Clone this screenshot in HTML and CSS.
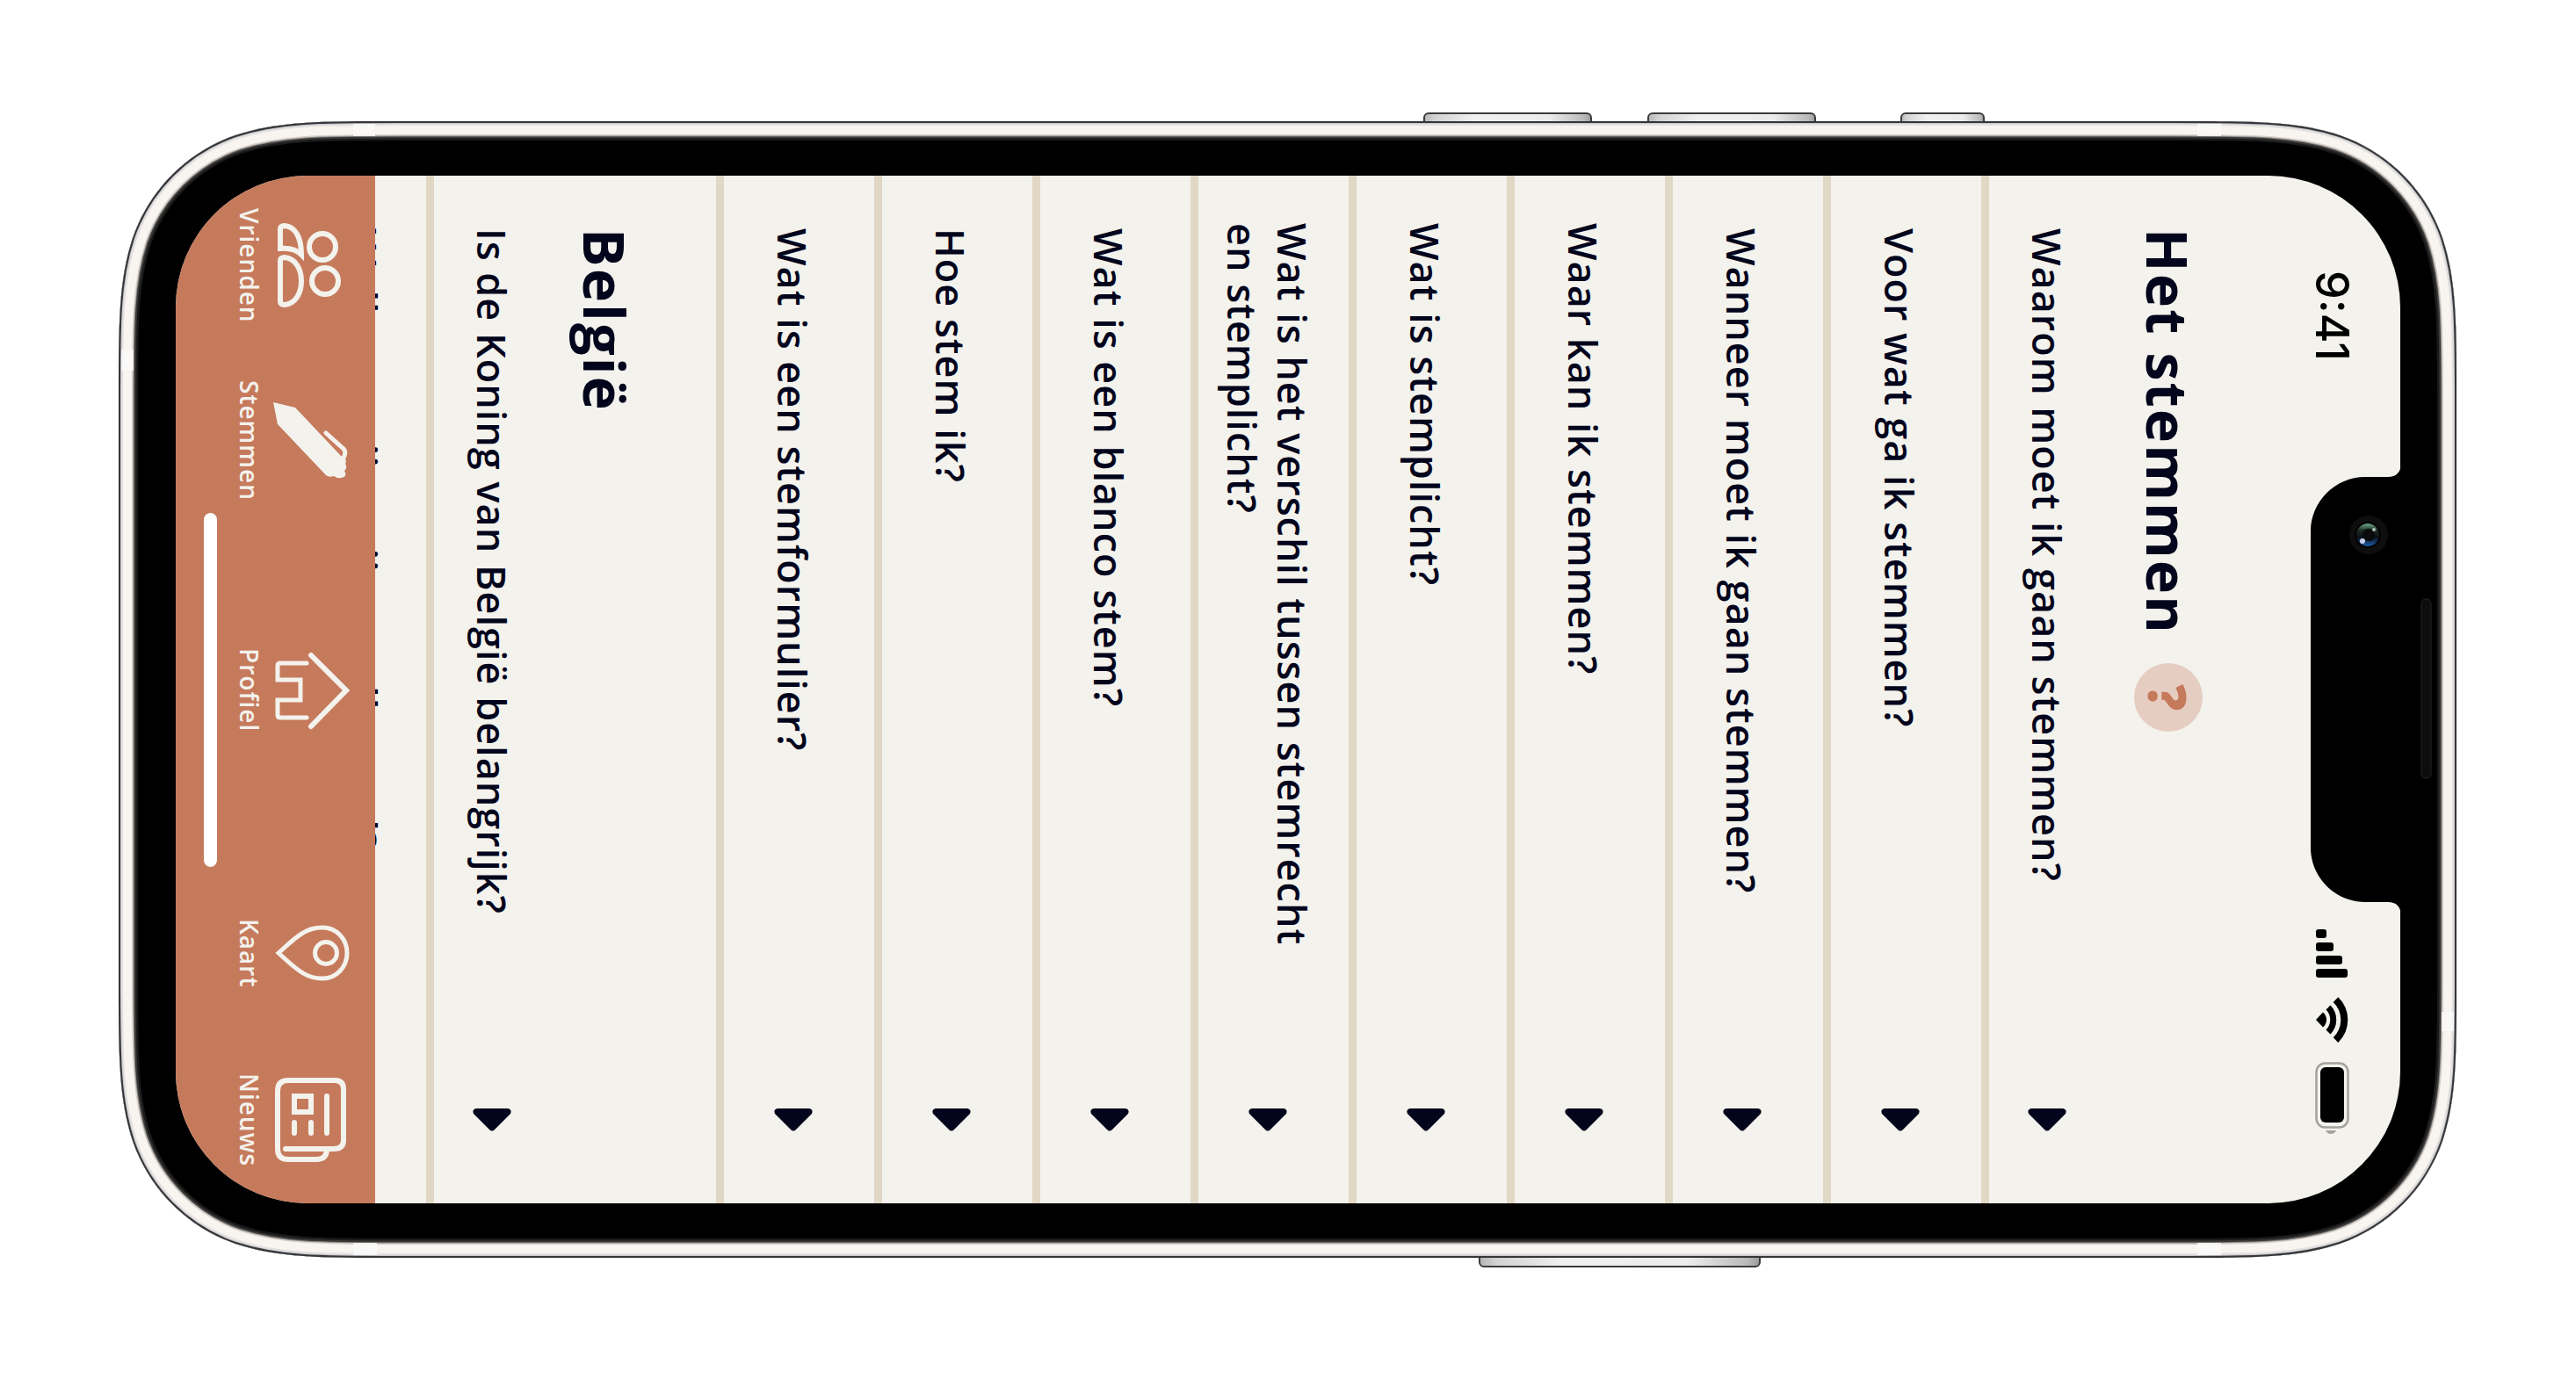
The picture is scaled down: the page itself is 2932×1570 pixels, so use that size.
FILE: index.html
```html
<!DOCTYPE html>
<html lang="nl">
<head>
<meta charset="utf-8">
<meta name="viewport" content="width=device-width, initial-scale=1">
<title>Het stemmen</title>
<link rel="stylesheet" href="styles.css">
</head>
<body>
<div class="stage">
  <div class="phone">
    <svg class="phone-frame" viewBox="0 0 2661 1294" preserveAspectRatio="none" aria-hidden="true">
      <defs>
        <linearGradient id="key" x1="0" x2="1" y1="0" y2="0">
          <stop offset="0" stop-color="#b5b5b5"/>
          <stop offset="0.06" stop-color="#d2d2d2"/>
          <stop offset="0.3" stop-color="#f0f0f0"/>
          <stop offset="0.75" stop-color="#ececec"/>
          <stop offset="0.96" stop-color="#b8b8b8"/>
          <stop offset="1" stop-color="#9a9a9a"/>
        </linearGradient>
        <path id="body" d="M321 0H2340C2432 0 2479 0 2528 16C2583 35 2626 78 2645 133C2661 182 2661 229 2661 321V973C2661 1065 2661 1112 2645 1161C2626 1216 2583 1259 2528 1278C2479 1294 2432 1294 2340 1294H321C229 1294 182 1294 133 1278C78 1259 35 1216 16 1161C0 1112 0 1065 0 973V321C0 229 0 182 16 133C35 78 78 35 133 16C182 0 229 0 321 0Z"/>
        <clipPath id="body-clip"><use href="#body"/></clipPath>
      </defs>
      <g fill="url(#key)" stroke="#3a3c3a" stroke-width="2">
        <rect x="1486" y="-9" width="190" height="20" rx="5"/>
        <rect x="1741" y="-9" width="190" height="20" rx="5"/>
        <rect x="2029" y="-9" width="94" height="20" rx="5"/>
        <rect x="1549" y="1284" width="319" height="20" rx="5"/>
      </g>
      <g clip-path="url(#body-clip)" fill="none">
        <use href="#body" fill="#000"/>
        <use href="#body" stroke="#1a1a1a" stroke-width="44"/>
        <use href="#body" stroke="#3a3a39" stroke-width="39"/>
        <use href="#body" stroke="#8f8b87" stroke-width="35"/>
        <use href="#body" stroke="#d3ceca" stroke-width="33"/>
        <use href="#body" stroke="#f8f4ef" stroke-width="30"/>
        <use href="#body" stroke="#e3e0df" stroke-width="10"/>
        <use href="#body" stroke="#c6c6cb" stroke-width="6"/>
        <use href="#body" stroke="#34363a" stroke-width="4"/>
      </g>
      <g fill="#fafafa" opacity="0.8">
        <rect x="267" y="3" width="25" height="14"/>
        <rect x="267" y="1277" width="27" height="14"/>
        <rect x="2366" y="3" width="27" height="14"/>
        <rect x="2366" y="1277" width="27" height="14"/>
        <rect x="3" y="260" width="14" height="24"/>
        <rect x="2644" y="1014" width="14" height="22"/>
      </g>
    </svg>

    <div class="screen">
      <header class="status">
        <time class="clock">9:41</time>
        <div class="status-icons">
          <svg width="37" height="55" viewBox="0 0 37 55" role="img" aria-label="Signaal">
            <rect width="12" height="10" rx="3"/><rect y="15" width="20" height="10" rx="3"/><rect y="30" width="30" height="10" rx="3"/><rect y="45" width="36" height="10" rx="3"/>
          </svg>
          <svg width="37" height="52" viewBox="0 0 37 52" role="img" aria-label="Wifi">
            <path d="M0 26L8 17.500Q12 21 12 26T8 34.500Z"/>
            <path d="M14 12A20 20 0 0 1 14 40" fill="none" stroke="#000" stroke-width="7"/>
            <path d="M22.500 3A32 32 0 0 1 22.500 49" fill="none" stroke="#000" stroke-width="8"/>
          </svg>
          <svg width="39" height="83" viewBox="0 0 39 83" role="img" aria-label="Batterij">
            <rect x="1.500" y="1.500" width="36" height="73" rx="10" fill="none" stroke="#a3a29d" stroke-width="2.500"/>
            <rect x="6" y="6" width="27" height="63" rx="6"/>
            <path d="M12 78H24Q22 82 18 82T12 78Z" fill="#a3a29d"/>
          </svg>
        </div>
      </header>

      <main class="content">
        <section class="topic">
          <div class="topic-head">
            <h1 class="topic-title">Het stemmen</h1>
            <button class="help" type="button" aria-label="Uitleg">?</button>
          </div>
          <button class="question question--lead" type="button"><span>Waarom moet ik gaan stemmen?</span><svg class="arrow" viewBox="0 0 44 26"><path d="M4 0H40Q45 1 43 6L25 24Q22 27 19 24L1 6Q-1 1 4 0Z"/></svg></button>
          <button class="question" type="button"><span>Voor wat ga ik stemmen?</span><svg class="arrow" viewBox="0 0 44 26"><path d="M4 0H40Q45 1 43 6L25 24Q22 27 19 24L1 6Q-1 1 4 0Z"/></svg></button>
          <button class="question" type="button"><span>Wanneer moet ik gaan stemmen?</span><svg class="arrow" viewBox="0 0 44 26"><path d="M4 0H40Q45 1 43 6L25 24Q22 27 19 24L1 6Q-1 1 4 0Z"/></svg></button>
          <button class="question question--outdent" type="button"><span>Waar kan ik stemmen?</span><svg class="arrow" viewBox="0 0 44 26"><path d="M4 0H40Q45 1 43 6L25 24Q22 27 19 24L1 6Q-1 1 4 0Z"/></svg></button>
          <button class="question question--outdent" type="button"><span>Wat is stemplicht?</span><svg class="arrow" viewBox="0 0 44 26"><path d="M4 0H40Q45 1 43 6L25 24Q22 27 19 24L1 6Q-1 1 4 0Z"/></svg></button>
          <button class="question question--outdent" type="button"><span>Wat is het verschil tussen stemrecht<br>en stemplicht?</span><svg class="arrow" viewBox="0 0 44 26"><path d="M4 0H40Q45 1 43 6L25 24Q22 27 19 24L1 6Q-1 1 4 0Z"/></svg></button>
          <button class="question" type="button"><span>Wat is een blanco stem?</span><svg class="arrow" viewBox="0 0 44 26"><path d="M4 0H40Q45 1 43 6L25 24Q22 27 19 24L1 6Q-1 1 4 0Z"/></svg></button>
          <button class="question" type="button"><span>Hoe stem ik?</span><svg class="arrow" viewBox="0 0 44 26"><path d="M4 0H40Q45 1 43 6L25 24Q22 27 19 24L1 6Q-1 1 4 0Z"/></svg></button>
          <button class="question" type="button"><span>Wat is een stemformulier?</span><svg class="arrow" viewBox="0 0 44 26"><path d="M4 0H40Q45 1 43 6L25 24Q22 27 19 24L1 6Q-1 1 4 0Z"/></svg></button>
        </section>
        <section class="topic">
          <div class="topic-head topic-head--next">
            <h2 class="topic-title">België</h2>
          </div>
          <button class="question question--lead" type="button"><span>Is de Koning van België belangrijk?</span><svg class="arrow" viewBox="0 0 44 26"><path d="M4 0H40Q45 1 43 6L25 24Q22 27 19 24L1 6Q-1 1 4 0Z"/></svg></button>
          <button class="question question--last" type="button"><span>Welke partijen zijn er allemaal?</span></button>
        </section>
      </main>

      <footer class="dock">
        <nav class="tabs">
          <a class="tab" href="#vrienden">
            <svg class="tab-icon" viewBox="0 0 88 100" stroke-width="6">
              <circle cx="57" cy="29" r="15"/><circle cx="60" cy="68" r="15"/>
              <path d="M9 31V9Q9 5 14 5C26 6 33 18 33 38C27 32 20 30 9 31Z"/>
              <path d="M14 41C26 42 33 54 33 68C33 82 26 94 14 95Q9 95 9 91V45Q9 41 14 41Z"/>
            </svg>
            <span>Vrienden</span>
          </a>
          <a class="tab" href="#stemmen">
            <svg class="tab-icon" viewBox="0 0 88 100" stroke-width="5">
              <path class="solid" d="M1 7L26 13L79 69Q86 72 83 77Q86 81 82 85Q86 92 78 93Q74 94 70 91Q65 93 61 90L6 32Z"/>
              <path d="M61 42L81 60Q85 64 80 72"/>
            </svg>
            <span>Stemmen</span>
          </a>
          <a class="tab" href="#profiel">
            <svg class="tab-icon" viewBox="0 0 88 100" stroke-width="6">
              <path d="M44 10L84 50L44 91"/>
              <path d="M39 19H9Q6 19 6 22V38H32V61H6V78Q6 81 9 81H39" stroke-width="5"/>
            </svg>
            <span>Profiel</span>
          </a>
          <a class="tab" href="#kaart">
            <svg class="tab-icon" viewBox="0 0 88 100" stroke-width="5">
              <path d="M7 50C17 41 26 32 35 27C43 22 50 21 57 21C73 21 85 34 85 50C85 66 73 79 57 79C50 79 43 78 35 73C26 68 17 59 7 50Z"/>
              <circle cx="61" cy="50" r="12.500"/>
            </svg>
            <span>Kaart</span>
          </a>
          <a class="tab" href="#nieuws">
            <svg class="tab-icon" viewBox="0 0 88 100" stroke-width="6">
              <path d="M15 83H70Q81 83 81 73V15Q81 5 71 5H18Q6 5 6 17V83Q6 95 18 95H50Q62 95 62 83"/>
              <path d="M25 23H44V41H25ZM62 23V65M25 53V65M44 53V65"/>
            </svg>
            <span>Nieuws</span>
          </a>
        </nav>
        <div class="home-bar"></div>
      </footer>
    </div>

    <svg class="notch" width="140" height="514" viewBox="0 0 140 514" aria-hidden="true">
      <defs>
        <linearGradient id="lens" x1="0" x2="0" y1="0" y2="1">
          <stop offset="0" stop-color="#6fae8c"/><stop offset="0.3" stop-color="#1d2b26"/><stop offset="0.6" stop-color="#0b0f1c"/><stop offset="1" stop-color="#1f5fae"/>
        </linearGradient>
      </defs>
      <path d="M103 0Q102 15 88 15H62C28 15 0 43 0 77V437C0 471 28 499 62 499H88Q102 499 103 514Z"/>
      <circle cx="66" cy="81" r="22" fill="#0e0e0e"/>
      <circle cx="65" cy="81" r="13" fill="url(#lens)"/>
      <circle cx="66" cy="81" r="7" fill="#0b0b0b"/>
      <circle cx="65" cy="81" r="14" fill="none" stroke="#020202" stroke-width="2"/>
      <circle cx="72" cy="75" r="2" fill="#a8c4b5"/>
      <circle cx="59" cy="88" r="3" fill="#c9cfe4"/>
      <rect x="126" y="154" width="11" height="204" rx="5" fill="#0d0d0d" stroke="#242424"/>
    </svg>
  </div>
</div>
</body>
</html>
```
FILE: styles.css
```css
* {
  box-sizing: border-box;
}

body {
  margin: 0;
  background: #fff;
  color: #03051c;
  font-family: "Open Sans", "Noto Sans", sans-serif;
}

button {
  margin: 0;
  border: 0;
  background: none;
  color: inherit;
  font: inherit;
  text-align: start;
}

.stage {
  display: flex;
  min-height: 100vh;
  padding: 138px 136px 138px 135px;
}

.phone {
  position: relative;
  display: flex;
  flex: 1;
  min-width: 0;
  padding: 62px 64px 62px 65px;
}

.phone-frame {
  position: absolute;
  inset: 0;
  width: 100%;
  height: 100%;
  overflow: visible;
}

.notch {
  position: absolute;
  top: 50%;
  right: 26px;
  transform: translateY(-50%);
}

/* The device lies on its side: lines run top to bottom, blocks right to left. */
.screen {
  position: relative;
  display: flex;
  flex: 1;
  flex-direction: column;
  min-width: 0;
  overflow: hidden;
  border-radius: 150px;
  background: #f3f2ec;
  writing-mode: vertical-rl;
}

.status {
  display: flex;
  flex: none;
  align-items: center;
  justify-content: space-between;
  block-size: 156px;
  padding-inline: 108px 78px;
  color: #000;
}

.clock {
  font: 500 52px/60px Inter, sans-serif;
}

.status-icons {
  display: flex;
  align-items: center;
  gap: 22px;
}

.content {
  flex: 1;
  min-block-size: 0;
  overflow: hidden;
}

.topic-head {
  display: flex;
  align-items: center;
  gap: 32px;
  padding-block: 68px 32px;
  padding-inline-start: 60px;
}

.topic-head--next {
  padding-block: 86px 23px;
}

.topic-title {
  margin: 0;
  font-size: 65px;
  font-weight: 700;
  line-height: 80px;
  letter-spacing: 2px;
}

.help {
  display: flex;
  align-items: center;
  justify-content: center;
  inline-size: 78px;
  block-size: 78px;
  padding: 0;
  border-radius: 50%;
  background: #e6cdc2;
  color: #c67a5c;
  font-size: 60px;
  font-weight: 800;
  line-height: 78px;
  writing-mode: vertical-rl;
}

.question {
  display: flex;
  align-items: center;
  justify-content: space-between;
  inline-size: 100%;
  block-size: 180px;
  padding-block: 14px 0;
  padding-inline: 60px 82px;
  border-block-end: 9px solid #e1d7c5;
  font-size: 45px;
  font-weight: 600;
  line-height: 57px;
  letter-spacing: 1px;
  white-space: nowrap;
  writing-mode: vertical-rl;
}

.question--lead {
  block-size: 141px;
  padding-block: 0;
}

.question--outdent {
  padding-inline-start: 54px;
}

.question--last {
  block-size: 153px;
  padding-block: 0;
}

.arrow {
  flex: none;
  width: 44px;
  height: 26px;
  fill: #03051c;
}

.dock {
  display: flex;
  flex: none;
  flex-direction: column;
  align-items: center;
  justify-content: space-between;
  block-size: 227px;
  padding-block: 29px 32px;
  background: #c67a5c;
  color: #f3f2ec;
}

.tabs {
  display: grid;
  grid-template-columns: 204fr 194fr 376fr 222fr 158fr;
  inline-size: 100%;
  padding-inline-end: 16px;
}

.tab {
  display: flex;
  flex-direction: column;
  align-items: center;
  gap: 6px;
  color: inherit;
  font-size: 28px;
  font-weight: 600;
  line-height: 40px;
  letter-spacing: 1px;
  text-decoration: none;
}

.tab-icon {
  width: 88px;
  height: 100px;
  fill: none;
  stroke: #f3f2ec;
  stroke-linecap: round;
}

.solid {
  fill: #f3f2ec;
  stroke: none;
}

.home-bar {
  inline-size: 403px;
  block-size: 15px;
  border-radius: 8px;
  background: #fff;
}
```
